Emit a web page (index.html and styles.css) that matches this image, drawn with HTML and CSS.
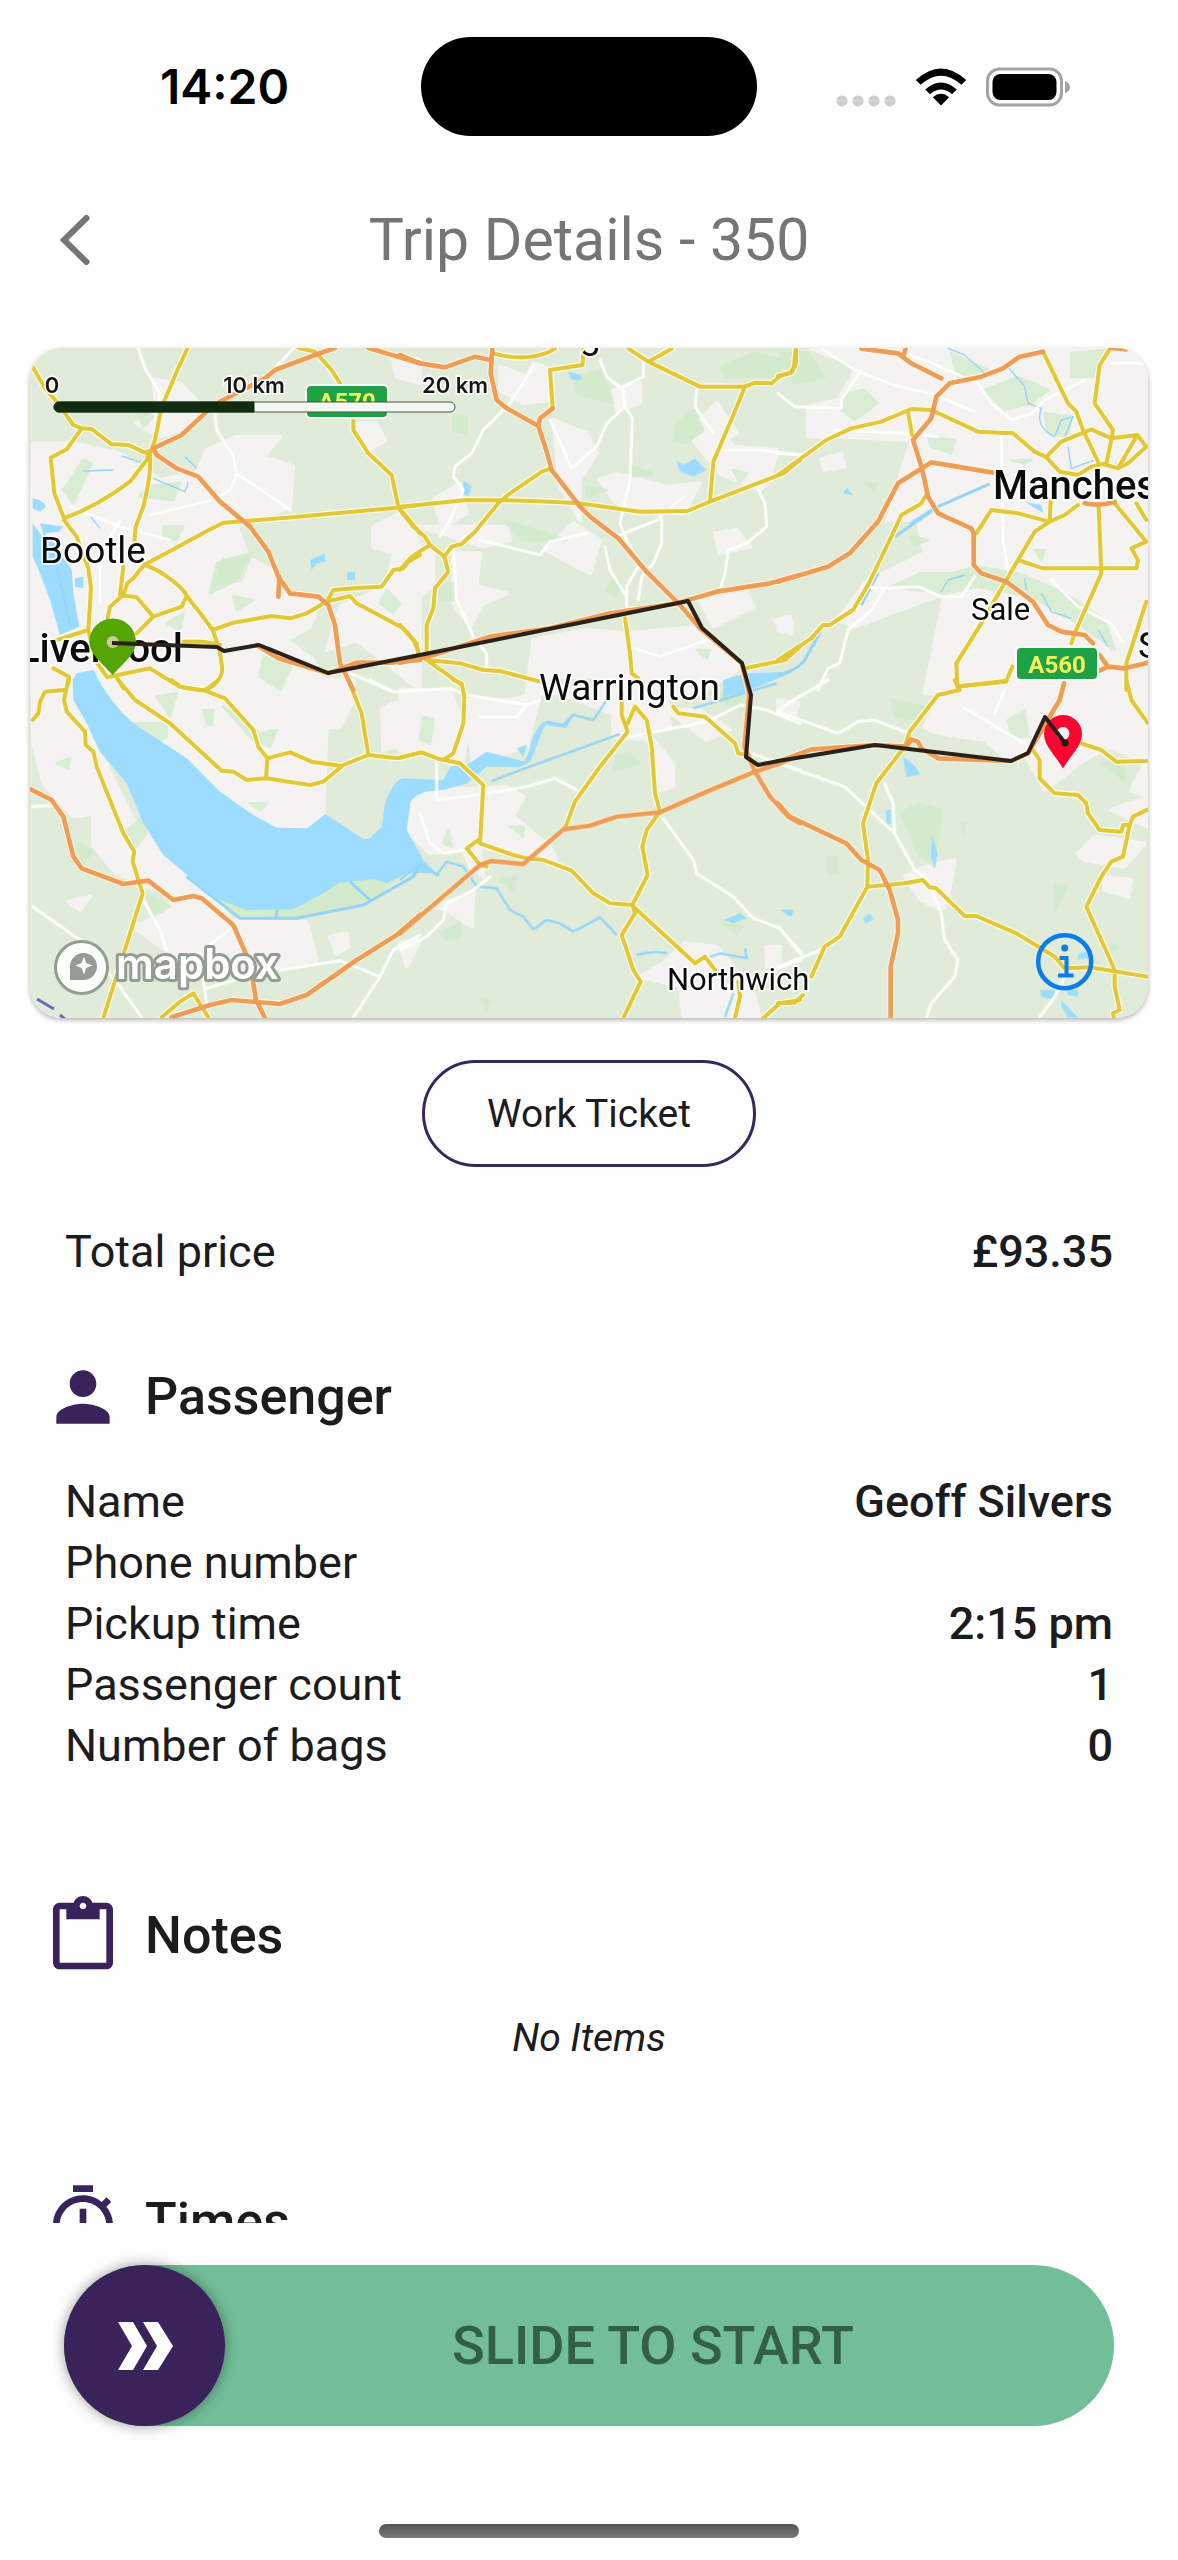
FILE: index.html
```html
<!DOCTYPE html>
<html lang="en">
<head>
<meta charset="utf-8">
<meta name="viewport" content="width=device-width, initial-scale=1">
<title>Trip Details - 350</title>
<link rel="stylesheet" href="styles.css">
</head>
<body>
<div class="app">
  <div class="status">
    <time class="status-time">14:20</time>
    <span class="island"></span>
    <div class="status-icons">
      <svg class="signal" viewBox="0 0 60 12" width="60" height="12"><circle cx="6" cy="6" r="5.5"/><circle cx="22" cy="6" r="5.5"/><circle cx="38" cy="6" r="5.5"/><circle cx="54" cy="6" r="5.5"/></svg>
      <svg class="wifi" viewBox="0 0 52 39" width="52" height="39"><path d="M26 38.500L17.800 30.200Q26 23.500 34.200 30.200Z"/><path d="M10.200 22.400Q26 8.600 41.800 22.400L37 27.200Q26 18 15 27.200Z"/><path d="M0.800 13Q26 -10 51.200 13L46.400 17.800Q26 -0.500 5.600 17.800Z"/></svg>
      <svg class="battery" viewBox="0 0 84 40" width="84" height="40"><rect x="1.500" y="2" width="74" height="36" rx="12" fill="none" stroke="#a3a2a4" stroke-width="3"/><rect x="6.500" y="7" width="64" height="26" rx="8"/><path d="M79 14Q84 16 84 20T79 26Z" fill="#a3a2a4"/></svg>
    </div>
  </div>

  <header class="header">
    <button class="back" type="button" aria-label="Back">
      <svg viewBox="0 0 30 52" width="30" height="52"><path d="M26.500 4L4 26L26.500 48" fill="none" stroke="#757575" stroke-width="6" stroke-linecap="round"/></svg>
    </button>
    <h1>Trip Details - 350</h1>
  </header>

  <main class="content">
    <div class="map">
      <svg viewBox="30 348 1118 670" preserveAspectRatio="xMidYMid slice" role="img" aria-label="Route map from Liverpool to Manchester Airport">
        <defs>
          <g id="minor">
            <g transform="translate(20 340) scale(.33333)"><path d="M355 25L375 85 420 160 410 240M820 25L760 90 680 150M585 220L590 270 640 350 650 400 630 450 580 480 390 525M650 400L740 460 810 510M150 500L300 560 450 600M240 780V650L300 540M990 1000L1110 1050"/></g>
            <g transform="translate(400 340) scale(.33333)"><path d="M400 80L330 190 250 270 215 340 165 380 160 410 190 450 150 540 120 590M600 60L620 110 670 150 675 200 620 250 590 320 515 385 450 240M675 200L697 235 690 420 660 550 680 600 720 670 680 740 680 820M240 600L420 645 450 605 560 580M660 585L785 535 785 610 760 670 725 710 715 780M615 620L630 690 680 770M890 150L885 200 940 280M1075 450L1095 490 1100 560 1040 610 985 630 975 700 960 750M960 330L1080 330 1200 345M160 620L170 780 220 890 260 940 260 980M730 70V110L670 140M850 470L780 530M690 920L780 950 920 900"/></g>
            <g transform="translate(778 340) scale(.33333)"><path d="M0 160L50 200 190 205 190 180 250 90M130 25L230 90 360 140 460 160 590 215M310 25L440 60 600 130 640 190 700 240 760 220 800 180 920 120M170 270L380 280 480 290M0 340L80 345M670 270L675 600 690 690M250 740L320 745 420 740 490 770 550 770 590 710M320 745L280 810 210 870 185 970 150 985 120 1050M820 720L900 800 1000 850 1030 900M1000 70H1105"/></g>
            <g transform="translate(20 680) scale(.33333)"><path d="M38 680L180 780 300 920 365 1012M38 380L110 375M1050 0L1120 35 1200 30M370 660L420 750 440 810M560 800L640 740M560 970L550 900M560 925L660 895M780 870L960 842 1080 890 1000 1012M1080 890L1120 810 1200 765"/></g>
            <g transform="translate(400 680) scale(.33333)"><path d="M0 35L150 25 200 45 380 75 350 110 240 110M110 250V360L200 350 380 320 465 295 530 330M60 400L90 490 130 520 190 510M380 75L420 60M690 170L920 125 1020 75 1100 90 1200 130M1050 220L1200 270M790 415L880 540 890 580 1000 650 1060 715 1140 745 1200 820M270 590L220 630 140 670 130 720 80 770 0 810M1200 840L1120 870"/></g>
            <g transform="translate(778 680) scale(.33333)"><path d="M150 0L30 70 0 95 180 160 240 125 290 120 390 160M0 250L200 320 350 460M320 310L345 370 350 460 410 570 450 600 490 700 500 780 540 840 530 890 460 970 445 1012M0 740L70 820M0 860L140 805M680 30L650 100M560 85L740 190M860 890L830 950 785 1012"/></g>
          </g>
          <g id="primary">
            <g transform="translate(20 340) scale(.33333)"><path d="M38 80L75 145 110 185 160 255 185 265 215 267 275 313 325 315 375 338 395 330M503 24L470 95 432 185 420 225 405 300 390 340M185 265L140 328 92 353 103 460 132 535M132 535C230 500 310 440 330 425L380 360 385 340M132 540L170 590 205 685 213 745 205 870M390 345C395 400 380 460 370 500L347 560 343 610M372 675C460 630 580 560 612 548L780 535 1130 503 1200 495M372 675L340 715 322 730 310 765 270 800 262 840M310 680L300 765M372 675C430 690 500 755 500 768L545 825 578 870 600 935 607 990C600 1030 570 1050 540 1051L480 1040 430 1010 390 985 262 1012M500 768L485 800 400 830 350 880M300 765L350 772 400 830M578 870L640 848 755 828 810 835 860 820 920 785 990 768 1010 790 1150 865 1190 910 1195 945M920 785L940 750 1000 745 1085 740 1120 690 1150 685 1165 665 1200 645M835 24L885 35 935 90 960 130M1000 240V270L1045 340 1115 405 1135 500 1200 580M95 905L205 870M262 1012L225 960 205 870M100 985L147 1010 145 1030M480 905H550L600 915M290 1012L310 1045"/></g>
            <g transform="translate(400 340) scale(.33333)"><path d="M280 40C350 60 420 55 465 26M550 24L548 75 450 90 458 205M685 26L745 65 900 140H1035L1065 128 1115 130 1140 108 1175 98 1188 70V24M745 65L815 26M1035 140L1000 225 940 365 930 485M0 500L200 480C400 480 500 488 535 490L720 515 862 513 930 485 1150 400 1200 360M455 385L425 395 330 460 295 490 225 575 185 612 155 620 133 650 145 695 105 745 100 805 80 855 80 945M0 510L40 560 75 590 90 615 133 650M90 615L50 640 30 655 0 690M0 855L40 900 60 945 80 960 180 970 250 990 300 993 420 1025M80 960L185 1035M675 835L690 940 695 1000 715 1015M1035 985L1155 960 1200 920"/></g>
            <g transform="translate(778 340) scale(.33333)"><path d="M53 24L48 80 38 98 0 108M0 405L145 300 220 265 310 245 400 207 460 210 600 275 705 280 770 335 805 352 845 395 900 405 940 380 975 372 1020 385 1050 370 1105 320 1078 285 1000 295 940 268 850 305 810 345M390 215L402 285M795 35L870 190 895 215 915 270 960 365M995 28L965 75 950 190 1005 270 1000 300 985 370M1078 285L1020 385M445 465L428 492 370 525 340 590 270 735 225 810 155 855 135 855 100 895 0 960M595 580L640 510 720 520 815 545 770 575 720 660 610 850 535 970 538 1040M815 545L860 525 900 495M815 545L818 480M720 660L795 685H1075L1080 660 1060 625 1105 605 1010 490M962 500L970 700 890 880 880 910M1105 785L1045 970V1050M538 1040L685 1022 703 980M1075 490L1105 540"/></g>
            <g transform="translate(20 680) scale(.33333)"><path d="M145 0L132 60 140 95 195 155 197 195 220 215 230 260 310 460 343 515 338 545 368 640 250 1014M132 30L75 35 60 65 55 100 38 120M295 0L345 60 450 130 605 272 640 275 680 300 740 295 870 315 910 305 970 255 1045 225 1135 235 1200 218M455 0L480 20 555 32 595 0M555 32L615 55 700 150 715 200 742 235 738 295M742 235L810 217 875 245 965 258M985 0L1025 100 1045 225M425 1012L480 965 520 940 565 1012"/></g>
            <g transform="translate(400 680) scale(.33333)"><path d="M0 232L65 217 120 238 180 250 250 315 240 490M160 0L185 10 193 50 190 130 160 220 130 240M235 480L200 505 240 555 260 560M240 490L340 525 380 535 430 540 515 572 580 640 630 670 695 675 820 790 885 850 915 830 945 870M1015 905L1020 950 1005 1014M665 40V105L683 155 600 260 525 365 495 445M683 130L705 80 740 120 755 200 765 340 780 395 740 450 727 500 743 585 697 675 705 700 665 765 700 870 722 905 670 1014M820 80L835 100 915 110 1005 190 1015 220 1040 225M1090 1014L1140 970 1200 960"/></g>
            <g transform="translate(778 680) scale(.33333)"><path d="M530 0L545 30 480 45 395 155 380 200 295 310 255 430 270 540 268 620 185 770 140 800 100 890M545 18L685 5M0 970L50 968 75 945M268 620L380 610 435 600 455 622 475 625 560 708 595 708 715 760 830 830 860 865 935 862 1110 890M910 190L970 210 1015 245 1110 243M765 210L785 240V295L830 340 900 345 925 370 930 400 965 450 1030 455 1035 435H1055L1065 410 1110 388M1055 435L1035 530 1000 545 970 590 925 680 1010 870V920L1025 990 1005 1000 1008 1014M1045 0L1060 60 1110 130"/></g>
          </g>
          <g id="motorway">
            <g transform="translate(20 340) scale(.33333)"><path d="M945 24L885 45 765 90 735 115M735 115L600 185 560 215 485 285 400 325 410 345 470 385 535 410 600 485 690 560 745 635 775 710 810 760 895 770 925 795 945 855 960 970 1000 1050M775 770L778 710M1045 24L1200 70M710 915L775 955 925 1000 1010 968H1110L1200 960"/></g>
            <g transform="translate(400 340) scale(.33333)"><path d="M0 45L60 70 135 82 225 50 270 60M277 26L272 100 290 180 320 205 415 258 440 335 455 390 540 500 570 530 655 595 735 690 845 800 900 865 1025 970 1048 1060M458 205L420 235 415 258M0 968L100 945 270 890 450 865 630 820 830 790 950 755 1110 730 1200 705"/></g>
            <g transform="translate(778 340) scale(.33333)"><path d="M250 26L360 40 400 70 490 115M383 26L375 50M795 35L725 50 675 85 610 110 515 130 475 170 460 235 405 300 432 385 450 470 480 520 580 565 587 580V675L610 700 685 725 765 785 810 855 850 875 920 885 945 910M0 725L150 680 215 640 300 545 360 430 432 385 460 367 645 398M965 945L990 980 1040 985 1110 968M990 980L965 992M920 490Q965 500 1010 485M1000 24L1045 28"/></g>
            <g transform="translate(20 680) scale(.33333)"><path d="M32 328L95 360 130 410 160 530 185 565 310 612 385 602 460 660 520 648 545 655 640 735 690 850 708 960 735 1014M455 1012L570 975 635 960 780 972 860 945 1010 840 1130 765 1200 705"/></g>
            <g transform="translate(400 680) scale(.33333)"><path d="M0 760L240 555 275 543 370 552 490 448 570 437 650 410 780 397 920 335 1065 275 1140 250 1200 225M1048 30L1033 200 1065 275 1110 350 1165 410 1200 430"/></g>
            <g transform="translate(778 680) scale(.33333)"><path d="M0 245L100 208 290 195 385 200 400 178 420 185 430 205 480 235 700 243 750 220 845 60 858 10M0 370L35 410 205 490 250 540 305 570 335 630 360 720V760L338 860V1014"/></g>
          </g>
        </defs>

        <rect class="land" x="30" y="348" width="1118" height="670"/>

        <!-- built-up areas -->
        <g class="urban">
          <g transform="translate(20 340) scale(.33333)"><path d="M38 310L160 310 300 340 420 420 530 400 560 330 650 290 780 290 730 350 820 380 810 500 650 560 680 640 600 650 570 750 670 730 700 660 770 700 810 760 900 780 870 860 800 900 880 960 920 1060H30ZM400 120L480 130 540 190 510 260 420 290 350 250 410 220ZM1115 40L1200 60V130L1130 110ZM1060 560L1140 520 1200 610V1050L1010 900 920 930 960 800 1100 740 1120 640 1060 620ZM1000 250L1070 250 1095 300 1050 330Z"/></g>
          <g transform="translate(400 340) scale(.33333)"><path d="M300 80L380 110 400 70 460 90 450 180 370 190 300 150ZM640 150L720 130 720 190 650 210ZM460 240L560 280 590 340 540 420 540 540 480 440ZM600 420L650 400 800 440 900 430 850 520 700 520 640 480ZM440 630L520 550 600 600 570 700 530 680ZM100 480L180 430 200 520 130 560ZM60 560L250 620 330 600 320 560 180 560ZM160 640L240 640 230 740 320 760 250 790 210 860 160 790ZM880 300L960 260 1000 320 1130 330 1110 420 1080 450 960 400ZM945 580L1010 570 1050 620 960 640ZM0 650L100 620 100 740 0 800ZM400 900L560 870 680 880 900 860 1030 980 900 1060H380ZM900 780L1040 760 1060 800 940 860ZM1125 840L1170 830 1175 870 1140 870ZM900 240L950 190 1010 280 930 320Z"/></g>
          <g transform="translate(778 340) scale(.33333)"><path d="M100 26H1110V1060H440L500 760 230 860 180 840 260 730 440 640 420 540 330 540 360 430 400 300 200 290 90 290 90 200 180 180 240 80ZM130 360L190 340 200 380 140 390ZM0 870L40 840 40 880Z"/></g>
          <g transform="translate(20 680) scale(.33333)"><path d="M38 0H1000L1000 60 960 140 920 140 910 410 860 440 770 440 700 405 240 110 190 110 340 420 590 655 630 720 860 725 890 840 780 860 560 900 450 820 340 740 440 700 460 650 290 580 220 500 220 400 160 410 70 310 38 180ZM1085 90L1120 70 1200 65V180L1090 210ZM145 665L210 650 180 690ZM930 770L980 760 985 800 950 820Z"/></g>
          <g transform="translate(400 680) scale(.33333)"><path d="M20 350L130 330 320 320 370 350 340 410 450 500 470 540 390 540 240 500 250 590 210 560 190 510 90 520 20 450ZM0 30L150 30 200 160 190 240 110 230 0 210ZM190 60L330 60 420 40 380 200 220 250ZM500 50L800 50 810 140 740 160 820 250 820 320 780 330 750 180 640 170 640 100ZM100 680L220 640 215 740 140 690ZM850 790L950 800 1000 860 950 920 1050 900 1080 1014 850 1014 840 920 720 890 790 850ZM0 790L60 780 20 860ZM800 90L900 90 990 150 920 180ZM1100 800H1140V850L1100 860Z"/></g>
          <g transform="translate(778 680) scale(.33333)"><path d="M440 140L480 60 680 0H1110V250L990 200 920 240 800 330 740 220 680 230 620 180 480 160ZM380 590L440 560 530 540 510 650 490 690 430 660ZM900 520L950 470 1100 490 1040 560 920 540ZM970 590L1060 600 1050 650 980 630ZM1000 390L1110 350V440ZM0 60L60 70 50 110 0 100ZM1100 250L1060 330 1110 350Z"/></g>
        </g>

        <!-- woods and parks -->
        <g class="park">
          <g transform="translate(20 340) scale(.33333)"><path d="M190 360L215 370 160 490 130 450ZM380 440L480 430 460 480 360 470ZM590 670L690 640 650 720 570 760ZM1100 750L1140 790 1120 820 1080 790ZM440 850L490 820 480 870ZM350 210L400 230 370 260ZM640 770L700 780 650 810ZM430 560L490 560 470 600 430 600ZM730 950L820 970 780 1050 720 1010Z"/></g>
          <g transform="translate(400 340) scale(.33333)"><path d="M530 110L600 90 640 190 530 160ZM830 250L880 210 910 270 860 310 820 300ZM160 230H200V280L160 270ZM310 540L440 580 500 600 370 600ZM120 740L160 730 160 780 120 780ZM1000 390L1040 400 1020 430ZM560 440L620 450 560 470ZM960 80L1060 40 1160 60 1120 110 980 110ZM640 720L660 720 650 770 620 750ZM700 380L760 400 700 410ZM890 930L930 930 920 955Z"/></g>
          <g transform="translate(778 340) scale(.33333)"><path d="M0 30L90 40 140 110 50 130ZM200 160L260 150 300 190 230 240 190 210ZM720 110L810 150 760 190 680 210 620 150ZM880 40L980 30 950 110 880 110ZM800 220L880 230 870 290 810 280ZM450 290L530 300 520 340 460 320ZM520 40L630 90 540 110ZM260 430L300 430 290 450ZM400 590L450 600 410 615ZM700 360L760 360 740 370ZM520 700L600 680 720 700 860 760 980 840 1010 930 900 850 760 770 600 740 500 760 340 740 430 700ZM770 630L800 630 790 660Z"/></g>
          <g transform="translate(20 680) scale(.33333)"><path d="M410 50L470 40 450 110ZM340 130L440 130 440 170 410 190ZM550 90L580 90 575 135 560 130ZM610 80L720 160 770 150 750 200 700 180ZM320 450L360 420 380 460 340 510ZM110 250L150 235 145 265ZM690 370L740 370 720 390ZM170 490L220 510 190 550ZM380 640L450 680 400 700ZM590 655L680 690 820 688 960 608 1060 598 1150 580 1050 660 800 715 660 710Z"/></g>
          <g transform="translate(400 680) scale(.33333)"><path d="M70 110L100 120 90 190 60 180ZM650 230L690 220 720 250 640 270ZM300 600L350 590 340 630ZM130 490L145 450 155 500ZM970 730L1030 740 1010 765ZM980 10L1040 0 1030 90 960 60ZM330 440L370 440 370 470ZM120 760L180 730 180 770 140 780ZM250 960L270 960 260 990ZM480 0L620 0 500 20Z"/></g>
          <g transform="translate(778 680) scale(.33333)"><path d="M370 400L420 370 490 390 470 560 420 520ZM340 60L440 80 420 120 350 110ZM690 120L740 90 750 170 700 170ZM830 610L870 620 830 690ZM150 530L180 530 180 580 150 580ZM1000 790L1020 800 1000 820ZM970 250L1040 240 1040 300ZM550 430L560 430 555 460Z"/></g>
        </g>

        <!-- the Mersey, meres and rivers -->
        <g class="water">
          <g transform="translate(20 340) scale(.33333)"><path d="M38 550L75 600 60 550 130 560 115 575 75 580 120 630 155 690 160 760 178 860 120 885 90 780 60 700 38 650ZM38 475Q70 480 78 500L60 515 38 505ZM165 715L190 710 190 745 165 740ZM870 660L915 640 915 665 890 670 875 690ZM982 695H1005V720H982Z"/></g>
          <g transform="translate(20 680) scale(.33333)"><path d="M170 -20L220 -30Q270 70 340 130L500 235 600 335 700 405 770 443 862 445 915 403 960 430 1030 478 1050 475 1085 440 1095 370Q1120 300 1150 295L1270 300 1290 260 1340 255 1400 215 1515 245 1530 205C1540 150 1570 120 1580 125L1630 135 1660 100 1640 145 1580 135C1560 150 1555 200 1530 245L1500 262 1400 260 1340 310 1270 330 1215 335Q1165 355 1170 380L1160 450 1210 540 1260 590 1240 580 1160 580 1100 610 1060 598 960 608 900 645 820 688 680 690 590 655 520 600 430 525 370 430 320 310 240 215 200 130 160 60 158 0Z"/></g>
          <g transform="translate(400 340) scale(.33333)"><path d="M828 360L850 375 885 355 918 390 880 410 840 395ZM190 420L215 440 205 468 190 465ZM505 95L540 105 545 120 515 120Z"/></g>
          <g transform="translate(400 680) scale(.33333)"><path d="M350 205L380 195 370 230ZM970 720L1020 700 1040 715 1000 730ZM1140 690L1180 690 1175 710ZM970 0L1040 -20 1180 -25 1040 35 970 50Z"/></g>
          <g transform="translate(778 340) scale(.33333)"><path d="M195 460L205 443 225 465ZM740 485L790 495 797 520ZM390 550L460 505 470 510 400 552Z"/></g>
          <g transform="translate(778 680) scale(.33333)"><path d="M375 230Q420 260 425 285L385 290ZM325 390H338V430L325 435ZM462 465L478 520 470 565 458 530ZM5 690L45 690 35 710ZM255 715L275 700 285 720 265 730ZM785 930L830 930 830 960 790 950ZM850 960L900 1014H870L850 980ZM865 930H900V950L870 945ZM900 820L930 815 935 835 900 838Z"/></g>
        </g>
        <g class="stream">
          <g transform="translate(20 340) scale(.33333)"><path d="M305 348L370 370M190 393L280 390M400 415L495 455 505 425M495 350L530 385M200 515L240 565M100 640L150 850"/></g>
          <g transform="translate(20 680) scale(.33333)"><path d="M500 590L660 715H830L1030 675 1180 590 1200 550M990 605L1050 660M770 690V715" stroke-width="9"/></g>
          <g transform="translate(400 680) scale(.33333)"><path d="M0 600L60 550 110 585 140 545 190 560 230 620 290 625 330 690 370 710 400 748 440 720 480 730 520 755 600 712 650 765M275 303L375 265 660 162M440 125L490 135 520 105 580 120 620 60M880 85L1130 10M710 825Q760 810 800 820M930 830L960 820 1040 835 1035 805M1000 940L975 1010" stroke-width="7"/></g>
          <g transform="translate(778 340) scale(.33333)"><path d="M0 1005Q60 990 80 960L130 870M250 795L300 700M350 590L480 500 635 432" stroke-width="9"/><path d="M510 25L560 45 620 100M680 70L740 140 750 190 790 205Q770 260 830 290L850 240 885 230 860 290M870 320L880 385 950 360M490 755L510 720 560 705M790 760L820 815 880 835M740 715L745 750M960 870L990 920" stroke-width="4"/></g>
        </g>

        <use href="#minor" class="minor"/>
        <use href="#primary" class="casing"/>
        <use href="#motorway" class="casing"/>
        <use href="#primary" class="primary"/>
        <use href="#motorway" class="motorway"/>
        <path d="M37 999L54 1009M60 1015L66 1020" fill="none" stroke="#6d6bb8" stroke-width="3"/>

        <g class="shield">
          <rect x="306" y="385" width="82" height="33" rx="5"/><text x="347" y="410">A570</text>
          <rect x="1016" y="647" width="82" height="33" rx="5"/><text x="1057" y="673">A560</text>
        </g>

        <g class="labels">
          <text class="town" x="40" y="563">Bootle</text>
          <text class="city" x="183" y="662" text-anchor="end">Liverpool</text>
          <text class="town" x="539" y="700">Warrington</text>
          <text class="city" x="993" y="499">Manchester</text>
          <text class="village" x="971" y="620">Sale</text>
          <text class="village" x="667" y="990">Northwich</text>
          <text class="town" x="580" y="348">g</text>
          <text class="town" x="1138" y="658">S</text>
        </g>

        <path class="pin-start" d="M112.700 618.500a23.300 23.300 0 0 1 23.300 23.300c0 13-14 22-23.300 33.400c-9.300-11.400-23.300-20.400-23.300-33.400a23.300 23.300 0 0 1 23.300-23.300Z"/>
        <circle cx="112.700" cy="642" r="6" fill="#cfc9a0"/>
        <path class="pin-end" d="M1063 715a19 19 0 0 1 19 19c0 12-12 22-19 34.500c-7-12.500-19-22.500-19-34.500a19 19 0 0 1 19-19Z"/>
        <circle cx="1063" cy="733.500" r="6.500" fill="#f5f2f2"/>
        <path class="route" d="M112 643L217 647 224 651 259 645 328 673 420 655 688 601 702 628 742 663 751 695 746 757 758 765 778 761 875 745 1011 761 1028 753 1045 717 1065 743"/>
        <circle cx="1065" cy="743" r="3.500" fill="#1e1a16"/>

        <g class="scale">
          <text x="52" y="393" text-anchor="middle">0</text>
          <text x="254" y="393" text-anchor="middle">10 km</text>
          <text x="455" y="393" text-anchor="middle">20 km</text>
          <rect x="54" y="402" width="401" height="10" rx="5" fill="#f6f8f6" stroke="#45543f"/>
          <path d="M59 402H254V412H59A5 5 0 0 1 59 402Z" fill="#112c10" stroke="#112c10"/>
        </g>

        <g class="logo">
          <circle cx="81.500" cy="967.500" r="26" fill="#fbfffa" stroke="#949d92" stroke-width="3"/>
          <path d="M70 980V967A13.500 13.500 0 1 1 83.500 980ZM84 956.500L86 963 92.500 965.500 86 968 84 974.500 81.500 968 75.500 965.500 81.500 963Z" fill="#949d92" fill-rule="evenodd"/>
          <text x="116" y="979">mapbox</text>
        </g>

        <g fill="none" stroke="#0b7bf0" stroke-width="4.500">
          <circle cx="1064.700" cy="961.700" r="26.500"/>
          <path d="M1059.500 958H1066.500V975.500M1058 975.500H1073.500" stroke-width="4"/>
          <circle cx="1064.700" cy="948" r="3.500" fill="#0b7bf0" stroke="none"/>
        </g>
      </svg>
    </div>

    <button class="ticket" type="button">Work Ticket</button>

    <table class="rows price">
      <tbody><tr><th scope="row">Total price</th><td>£93.35</td></tr></tbody>
    </table>

    <section>
      <h2><svg viewBox="0 0 24 24" width="80" height="80"><path d="M12 12c2.210 0 4-1.790 4-4s-1.790-4-4-4-4 1.790-4 4 1.790 4 4 4zm0 2c-2.670 0-8 1.340-8 4v2h16v-2c0-2.660-5.330-4-8-4z"/></svg>Passenger</h2>
      <table class="rows">
        <tbody>
          <tr><th scope="row">Name</th><td>Geoff Silvers</td></tr>
          <tr><th scope="row">Phone number</th><td></td></tr>
          <tr><th scope="row">Pickup time</th><td>2:15 pm</td></tr>
          <tr><th scope="row">Passenger count</th><td>1</td></tr>
          <tr><th scope="row">Number of bags</th><td>0</td></tr>
        </tbody>
      </table>
    </section>

    <section>
      <h2><svg viewBox="0 0 24 24" width="80" height="80"><path d="M19 2h-4.180C14.400.840 13.300 0 12 0S9.600.840 9.180 2H5c-1.100 0-2 .9-2 2v16c0 1.100.9 2 2 2h14c1.100 0 2-.9 2-2V4c0-1.100-.9-2-2-2zm-7 0c.55 0 1 .45 1 1s-.45 1-1 1-1-.45-1-1 .45-1 1-1zm7 18H5V4h2v3h10V4h2v16z"/></svg>Notes</h2>
      <p class="empty">No Items</p>
    </section>

    <section>
      <h2><svg viewBox="0 0 24 24" width="80" height="80"><path d="M15 1H9v2h6V1zm-4 13h2V8h-2v6zm8.030-6.610l1.420-1.420c-.43-.51-.9-.99-1.410-1.410l-1.420 1.420C16.070 4.740 14.120 4 12 4c-4.970 0-9 4.030-9 9s4.020 9 9 9 9-4.030 9-9c0-2.120-.74-4.070-1.970-5.610zM12 20c-3.870 0-7-3.130-7-7s3.130-7 7-7 7 3.130 7 7-3.130 7-7 7z"/></svg>Times</h2>
    </section>
  </main>

  <footer class="footer">
    <div class="slide">
      <input id="start" type="range" min="0" max="100" value="0">
      <label for="start">SLIDE TO START</label>
      <svg class="chevrons" viewBox="0 0 56 50" width="56" height="50"><path d="M0 1H15L29 25 15 49H0L14 25ZM25 1H40L55 25 40 49H25L39 25Z" fill="#fff"/></svg>
    </div>
    <div class="home"></div>
  </footer>
</div>
</body>
</html>
```
FILE: styles.css
```css
* { box-sizing: border-box; }

body {
  margin: 0;
  background: #fefefe;
  color: #1c1b1d;
  font-family: Roboto, "Liberation Sans", sans-serif;
  font-size: 45px;
  line-height: 61px;
}

.app {
  display: flex;
  flex-direction: column;
  height: 100vh;
}

/* Status bar */
.status {
  display: grid;
  grid-template-columns: 1fr 336px 1fr;
  align-items: center;
  padding-top: 37px;
  color: #000;
}
.status-time {
  justify-self: center;
  padding-left: 28px;
  font: 600 48px/60px Inter, sans-serif;
}
.island {
  height: 99px;
  border-radius: 50px;
  background: #000;
}
.status-icons {
  display: flex;
  align-items: center;
  justify-content: flex-end;
  gap: 19px;
  padding-right: 108px;
}
.signal { align-self: flex-end; fill: #d0cfd0; }

/* Title bar */
.header {
  display: grid;
  grid-template-columns: 120px 1fr 120px;
  align-items: center;
  height: 208px;
  flex: none;
}
.header h1 {
  margin: 0;
  color: #757575;
  font-size: 59px;
  font-weight: 400;
  line-height: 68px;
  text-align: center;
}
.back {
  display: flex;
  align-self: stretch;
  align-items: center;
  padding: 0 0 0 60px;
  border: 0;
  background: none;
}

.content {
  display: flex;
  flex: 1;
  flex-direction: column;
  min-height: 0;
  padding-top: 4px;
  overflow: hidden;
}
.content > * { flex: none; }

.map {
  margin: 0 30px;
  border-radius: 32px;
  box-shadow: 0 2px 5px rgba(0, 0, 0, .3);
  overflow: hidden;
}
.map svg { display: block; width: 100%; aspect-ratio: 1118 / 670; }
.land { fill: #e0ecd9; }
.urban { fill: #f5f2f2; stroke: #f5f2f2; stroke-width: 12px; stroke-linejoin: round; }
.park { fill: #cdeac8; stroke: #cdeac8; stroke-width: 8px; stroke-linejoin: round; opacity: .7; }
.water { fill: #9bdcff; }
.stream { fill: none; stroke: #93d4f8; stroke-width: 4px; }
.minor, .casing, .primary, .motorway {
  fill: none;
  stroke-linecap: round;
  stroke-linejoin: round;
}
.minor { stroke: #fcfffa; stroke-width: 9px; }
.casing { stroke: #fdfbe8; stroke-width: 19px; }
.primary { stroke: #e2c737; stroke-width: 12px; }
.motorway { stroke: #ee9d56; stroke-width: 14px; }
.route { fill: none; stroke: #2a211b; stroke-width: 4px; stroke-linejoin: round; }
.pin-start { fill: #55a603; }
.pin-end { fill: #fb0631; }
.shield rect { fill: #1ba345; stroke: #f7faf5; stroke-width: 2px; }
.shield text {
  fill: #fbf05c;
  font: 700 24px Roboto, sans-serif;
  text-anchor: middle;
}
.labels text {
  fill: #0b0b0c;
  stroke: #fff;
  stroke-opacity: .75;
  stroke-width: 4px;
  stroke-linejoin: round;
  paint-order: stroke;
}
.labels .town { font-size: 37px; }
.labels .city { font-size: 40px; font-weight: 500; }
.labels .village { font-size: 31px; }
.scale text {
  fill: #161616;
  stroke: #fff;
  stroke-width: 3px;
  paint-order: stroke;
  font: 600 22px Inter, sans-serif;
}
.logo text {
  fill: #fff;
  stroke: #949d92;
  stroke-width: 6px;
  stroke-linejoin: round;
  paint-order: stroke;
  font: 600 42px Inter, sans-serif;
}

.ticket {
  align-self: center;
  height: 107px;
  margin: 42px 0 54px;
  padding: 0 62px;
  border: 3px solid #39265a;
  border-radius: 54px;
  background: none;
  color: inherit;
  font: 400 39px/48px Roboto, sans-serif;
}

.rows { border-collapse: collapse; width: 100%; }
.rows th, .rows td { height: 61px; padding: 0; }
.rows th { padding-left: 65px; font-weight: 400; text-align: left; }
.rows td { padding-right: 65px; font-weight: 500; text-align: right; }
.price { margin-bottom: 75px; }

section { margin-bottom: 116px; }
section .rows { margin-bottom: 120px; }
h2 {
  display: flex;
  align-items: center;
  gap: 22px;
  margin: 0 0 34px;
  padding-left: 43px;
  font-size: 52px;
  font-weight: 500;
  line-height: 80px;
}
h2 svg { fill: #3a235a; }
section:has(.rows) { margin-bottom: 0; }
.empty {
  margin: 0;
  font-size: 39px;
  font-style: italic;
  line-height: 56px;
  text-align: center;
}

/* Bottom action */
.footer { flex: none; padding: 42px 64px 22px; }
.slide {
  position: relative;
  display: grid;
  align-items: center;
}
.slide > * { grid-area: 1 / 1; }
.slide input {
  appearance: none;
  width: 100%;
  height: 161px;
  margin: 0;
  border-radius: 81px;
  background: #72be98;
}
.slide input::-webkit-slider-thumb {
  appearance: none;
  width: 161px;
  height: 161px;
  border-radius: 50%;
  background: #3a235a;
  box-shadow: 0 0 14px rgba(0, 0, 0, .4);
}
.slide label {
  padding-left: 128px;
  color: #335f47;
  font-size: 54px;
  font-weight: 500;
  text-align: center;
  pointer-events: none;
}
.chevrons { margin-left: 54px; pointer-events: none; }
.home {
  width: 40%;
  height: 14px;
  margin: 98px auto 0;
  border-radius: 7px;
  background: linear-gradient(#555456, #7a797b);
}
```
